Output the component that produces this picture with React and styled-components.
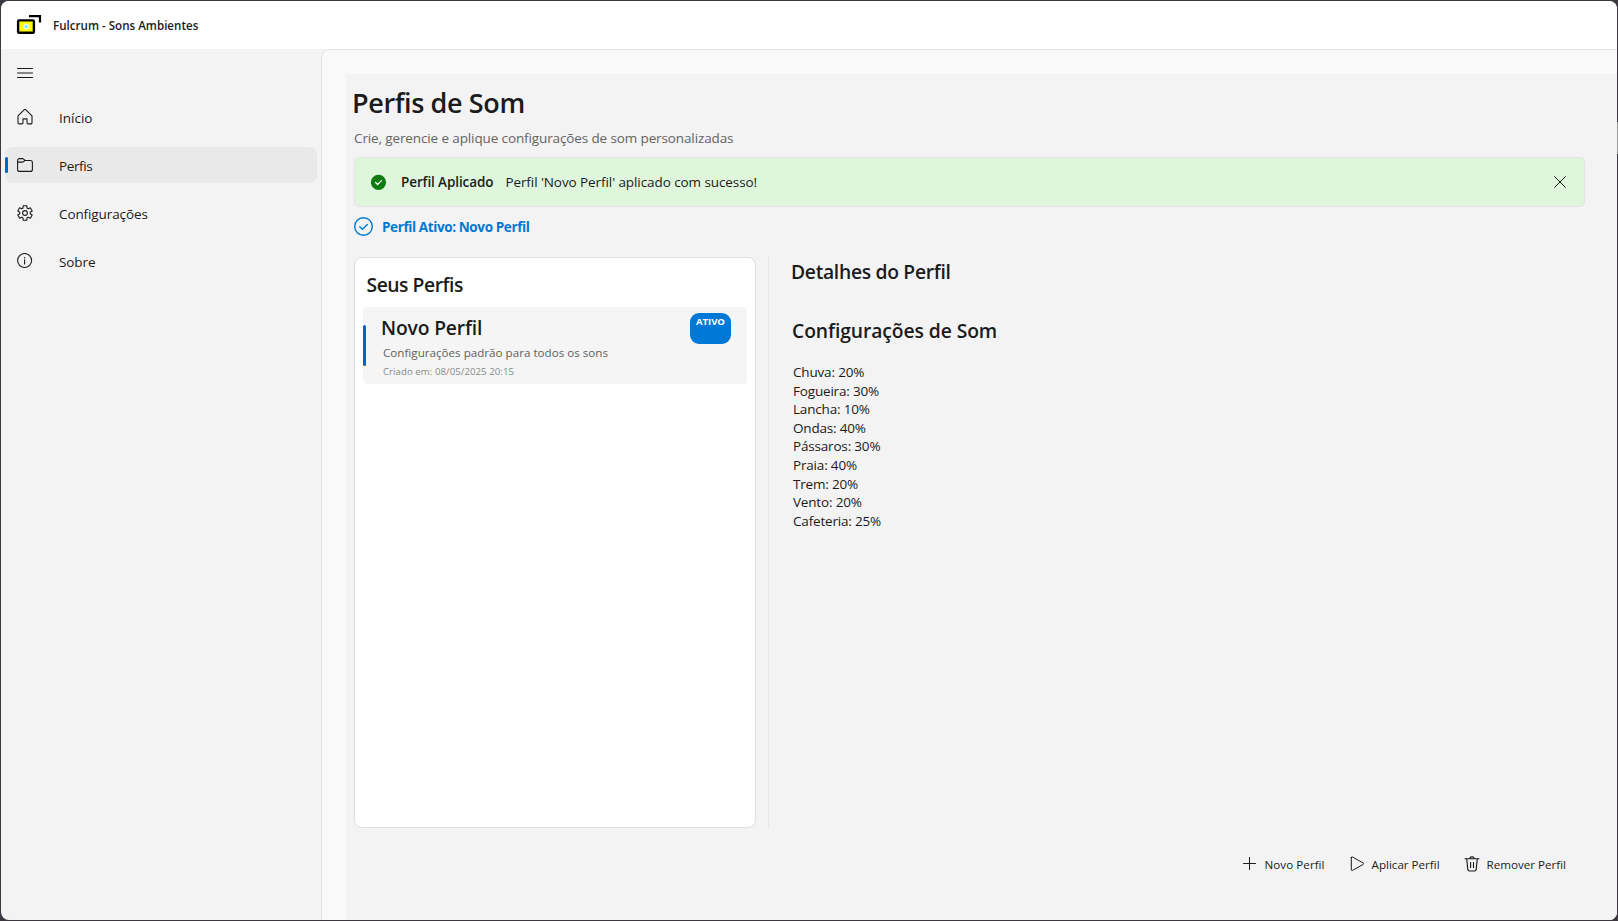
import React from 'react';
import styled, { createGlobalStyle } from 'styled-components';

const GlobalStyle = createGlobalStyle`
  * { box-sizing: border-box; }
  html, body, #root { margin: 0; height: 100%; }
  body {
    overflow: hidden;
    font-family: "Open Sans", "Noto Sans", sans-serif;
    color: #1b1b1b;
    white-space: nowrap;
  }
  svg { display: block; flex: none; }
`;

const Desktop = styled.div`
  width: 1618px;
  height: 921px;
  padding: 1px;
  background: linear-gradient(#9a9a9a, #9a9a9a) right 122px / 1px 32px no-repeat, #3b393f;
`;

const Window = styled.div`
  height: 919px;
  border-radius: 8px;
  overflow: hidden;
  background: #f3f3f3;
  display: flex;
  flex-direction: column;
`;

const TitleBar = styled.header`
  height: 48px;
  flex: none;
  background: #fff;
  display: flex;
  align-items: center;
  padding-left: 15px;
  gap: 11px;
`;

const Label = styled.span`
  font-size: ${p => p.$size}px;
  line-height: ${p => p.$line}px;
  font-weight: ${p => p.$weight || 400};
  letter-spacing: ${p => p.$track || 0}px;
  color: ${p => p.$color || 'inherit'};
  padding-top: ${p => p.$drop || 0}px;
`;

const Main = styled.div`
  flex: 1;
  display: flex;
  min-height: 0;
`;

const Sidebar = styled.nav`
  width: 320px;
  padding: 6px 4px;
  display: flex;
  flex-direction: column;
  gap: 12px;
`;

const NavItem = styled.div`
  position: relative;
  width: 312px;
  height: 36px;
  border-radius: 8px;
  padding-left: 12px;
  display: flex;
  align-items: center;
  gap: 26px;
  background: ${p => (p.$active ? '#e9e9e9' : 'transparent')};
  &::before {
    content: "";
    display: ${p => (p.$active ? 'block' : 'none')};
    position: absolute;
    left: 0;
    top: 10px;
    width: 3px;
    height: 16px;
    border-radius: 2px;
    background: #0067c0;
  }
`;

const MenuButton = styled(NavItem)`
  margin-bottom: -4px;
`;

const Frame = styled.main`
  flex: 1;
  border: 1px solid #e5e5e5;
  border-width: 1px 0 0 1px;
  border-top-left-radius: 8px;
  background: #f9f9f9;
  padding: 24px 0 0 24px;
  display: flex;
`;

const Page = styled.div`
  flex: 1;
  background: #f3f3f3;
  padding: 10px 32px 0 8px;
  display: flex;
  flex-direction: column;
`;

const PageTitle = styled.h1`
  margin: 0 0 6px -2px;
  font-size: 27px;
  line-height: 38px;
  font-weight: 600;
  letter-spacing: -0.38px;
`;

const Subtitle = styled.p`
  margin: 0 0 9px;
  font-size: 13.5px;
  line-height: 20px;
  letter-spacing: -0.12px;
  color: #646464;
`;

const InfoBar = styled.div`
  height: 50px;
  border: 1px solid #e3e5e3;
  border-radius: 5px;
  background: #dff6dd;
  display: flex;
  align-items: center;
  padding: 0 18.5px 0 16px;
`;

const InfoTitle = styled(Label)`
  margin: 0 12px 0 14px;
`;

const CloseButton = styled.span`
  margin-left: auto;
  margin-bottom: 1px;
`;

const ActiveRow = styled.div`
  height: 24px;
  margin: 8px 0 18px;
  display: flex;
  align-items: center;
  gap: 8px;
  color: #0078d4;
`;

const Columns = styled.section`
  height: 571px;
  display: flex;
`;

const Card = styled.div`
  width: 402px;
  border: 1px solid #dedede;
  border-radius: 8px;
  background: #fff;
  padding: 13px 8px 8px;
`;

const SectionTitle = styled.h2`
  margin: 0;
  margin-left: ${p => p.$indent || 0}px;
  font-size: 19.3px;
  line-height: 27px;
  font-weight: 600;
  letter-spacing: ${p => p.$track}px;
`;

const ProfileItem = styled.div`
  position: relative;
  height: 77px;
  margin-top: 9px;
  border-radius: 4px;
  background: #f5f5f5;
  padding: 6px 16px 6px 18px;
  display: flex;
  justify-content: space-between;
  &::before {
    content: "";
    position: absolute;
    left: 0;
    top: 18px;
    width: 3px;
    height: 41px;
    border-radius: 2px;
    background: #0067c0;
  }
`;

const ProfileText = styled.div`
  padding-top: 1px;
  display: flex;
  flex-direction: column;
`;

const Description = styled(Label)`
  margin: 4px 0 3px 2px;
`;

const Created = styled(Label)`
  margin-left: 2px;
`;

const Badge = styled.div`
  width: 41px;
  height: 31px;
  border-radius: 9px;
  background: #0078d7;
  color: #fff;
  padding-top: 2px;
  text-align: center;
  font-size: 9.65px;
  line-height: 14px;
  font-weight: 700;
  letter-spacing: -0.1px;
`;

const Divider = styled.div`
  width: 1px;
  margin: 0 22px 0 12px;
  background: #e7e7e7;
`;

const Details = styled.div`
  padding-top: 1px;
`;

const SoundHeading = styled.div`
  margin: 32px 0 19px;
`;

const SoundList = styled.ul`
  list-style: none;
  margin: 0 0 0 2px;
  padding: 0;
  font-size: 13.5px;
  line-height: 18.6px;
  letter-spacing: -0.18px;
`;

const Footer = styled.footer`
  height: 72px;
  padding-right: 19px;
  display: flex;
  align-items: center;
  justify-content: flex-end;
  gap: 24px;
`;

const Action = styled.div`
  display: flex;
  align-items: center;
  gap: ${p => p.$gap}px;
`;

const Svg = ({ w = 16, h = w, stroke = 1, children }) => (
  <svg width={w} height={h} viewBox={`0 0 ${w} ${h}`} fill="none" stroke="currentColor"
    strokeWidth={stroke} strokeLinecap="round" strokeLinejoin="round">{children}</svg>
);

const Logo = () => (
  <svg width="26" height="20" viewBox="0 0 26 20">
    <path d="M13 1.2H24V7.5" fill="none" stroke="#000" strokeWidth="2.2" />
    <rect x="2.1" y="5.4" width="15.8" height="12.4" rx="1" fill="#ff0" stroke="#000" strokeWidth="2.4" />
    <circle cx="10.2" cy="11.6" r="3" fill="#f8fdf0" />
    <circle cx="10.2" cy="11.6" r="1.4" fill="#5ef" />
  </svg>
);

// Outline of a six-toothed gear centred on (8, 8).
const gearPoints = Array.from({ length: 6 }, (_, i) => i * 60)
  .flatMap(a => [[a - 22, 5.3], [a - 14, 7.5], [a + 14, 7.5], [a + 22, 5.3]])
  .map(([deg, r]) => {
    const t = (deg * Math.PI) / 180;
    return `${(8 + r * Math.sin(t)).toFixed(2)},${(8 - r * Math.cos(t)).toFixed(2)}`;
  })
  .join(' ');

const icons = {
  home: <Svg stroke={1.1}><path d="M1 6.9 7.1.9a1.3 1.3 0 0 1 1.8 0L15 6.9v6.8a1.2 1.2 0 0 1-1.2 1.2h-2.6A1.2 1.2 0 0 1 10 13.700v-3.800H6v3.800a1.200 1.200 0 0 1-1.200 1.200H2.200A1.200 1.200 0 0 1 1 13.700Z" /></Svg>,
  folder: <Svg stroke={1.1}><path d="M.6 3.6a2 2 0 0 1 2-2h2.700c.5 0 1 .2 1.300.5L8.100 3.500h5.300a2 2 0 0 1 2 2v6.900a2 2 0 0 1-2 2H2.600a2 2 0 0 1-2-2ZM.6 5.100h4.600c.5 0 1-.2 1.300-.5L8.100 3.500" /></Svg>,
  gear: <Svg stroke={1.1}><polygon points={gearPoints} /><circle cx="8" cy="8" r="2.4" /></Svg>,
  info: <Svg stroke={1.1}><circle cx="7.6" cy="7.5" r="7" /><path d="M7.600 6.800v4.200" /><circle cx="7.6" cy="4.7" r=".75" fill="currentColor" stroke="none" /></Svg>,
};

const nav = [
  { icon: 'home', label: 'Início', track: 0 },
  { icon: 'folder', label: 'Perfis', track: -0.4, active: true },
  { icon: 'gear', label: 'Configurações', track: -0.1 },
  { icon: 'info', label: 'Sobre', track: -0.1 },
];

const sounds = [
  ['Chuva', 20], ['Fogueira', 30], ['Lancha', 10], ['Ondas', 40], ['Pássaros', 30],
  ['Praia', 40], ['Trem', 20], ['Vento', 20], ['Cafeteria', 25],
];

export default function App() {
  return (
    <>
      <GlobalStyle />
      <Desktop>
        <Window>
          <TitleBar>
            <Logo />
            <Label $size={11.6} $line={18} $weight={600} $drop={2}>Fulcrum - Sons Ambientes</Label>
          </TitleBar>
          <Main>
            <Sidebar>
              <MenuButton>
                <Svg><path d="M.5 3.500h15M.5 8h15M.5 12.500h15" /></Svg>
              </MenuButton>
              {nav.map(n => (
                <NavItem key={n.label} $active={n.active}>
                  {icons[n.icon]}
                  <Label $size={13.5} $line={18} $track={n.track} $drop={2}>{n.label}</Label>
                </NavItem>
              ))}
            </Sidebar>
            <Frame>
              <Page>
                <PageTitle>Perfis de Som</PageTitle>
                <Subtitle>Crie, gerencie e aplique configurações de som personalizadas</Subtitle>
                <InfoBar>
                  <Svg><circle cx="7.5" cy="8.3" r="7.6" fill="#107c10" stroke="none" /><path d="m4.600 8.500 2 2 3.900-3.900" stroke="#fff" strokeWidth="1.2" /></Svg>
                  <InfoTitle $size={13.5} $line={20} $weight={600} $track={-0.1}>Perfil Aplicado</InfoTitle>
                  <Label $size={13.5} $line={20} $track={-0.08}>Perfil 'Novo Perfil' aplicado com sucesso!</Label>
                  <CloseButton><Svg w={12}><path d="m.7.700 10.600 10.600M11.300.7.700 11.300" /></Svg></CloseButton>
                </InfoBar>
                <ActiveRow>
                  <Svg w={20} stroke={1.4}><circle cx="9.5" cy="9.5" r="8.8" /><path d="m5.800 9.800 2.600 2.500 4.900-4.900" /></Svg>
                  <Label $size={13.5} $line={20} $weight={700} $track={-0.39}>Perfil Ativo: Novo Perfil</Label>
                </ActiveRow>
                <Columns>
                  <Card>
                    <SectionTitle $indent={3.5} $track={-0.45}>Seus Perfis</SectionTitle>
                    <ProfileItem>
                      <ProfileText>
                        <SectionTitle as="h3" $track={-0.16}>Novo Perfil</SectionTitle>
                        <Description $size={11.6} $line={16} $track={0.02} $color="#606060">Configurações padrão para todos os sons</Description>
                        <Created $size={9.65} $line={14} $track={0.06} $color="#8a8a8a" $drop={1}>Criado em: 08/05/2025 20:15</Created>
                      </ProfileText>
                      <Badge>ATIVO</Badge>
                    </ProfileItem>
                  </Card>
                  <Divider />
                  <Details>
                    <SectionTitle $track={-0.3}>Detalhes do Perfil</SectionTitle>
                    <SoundHeading>
                      <SectionTitle $indent={1} $track={-0.08}>Configurações de Som</SectionTitle>
                    </SoundHeading>
                    <SoundList>
                      {sounds.map(([name, level]) => <li key={name}>{name}: {level}%</li>)}
                    </SoundList>
                  </Details>
                </Columns>
                <Footer>
                  <Action $gap={8}>
                    <Svg><path d="M8.500 1.500v12M2.500 7.500h12" /></Svg>
                    <Label $size={11.6} $line={18} $track={0.05} $drop={2}>Novo Perfil</Label>
                  </Action>
                  <Action $gap={7}>
                    <Svg><path d="M2.300 1.500v12.400c0 .5.5.8 1 .6l10.900-6.100a.8.8 0 0 0 0-1.400L3.300.9c-.5-.2-1 .1-1 .6Z" /></Svg>
                    <Label $size={11.6} $line={18} $drop={2}>Aplicar Perfil</Label>
                  </Action>
                  <Action $gap={7}>
                    <Svg stroke={1.15}><path d="M1 2.700h14M2.700 2.700l1.100 10.700c.1.900.8 1.600 1.700 1.600h5c.9 0 1.600-.7 1.700-1.600L13.300 2.700M6 2.700V2.300A1.500 1.500 0 0 1 7.500.8h1A1.500 1.500 0 0 1 10 2.300v.4M6.600 6.500v5M9.500 6.500v5" /></Svg>
                    <Label $size={11.6} $line={18} $drop={2}>Remover Perfil</Label>
                  </Action>
                </Footer>
              </Page>
            </Frame>
          </Main>
        </Window>
      </Desktop>
    </>
  );
}
